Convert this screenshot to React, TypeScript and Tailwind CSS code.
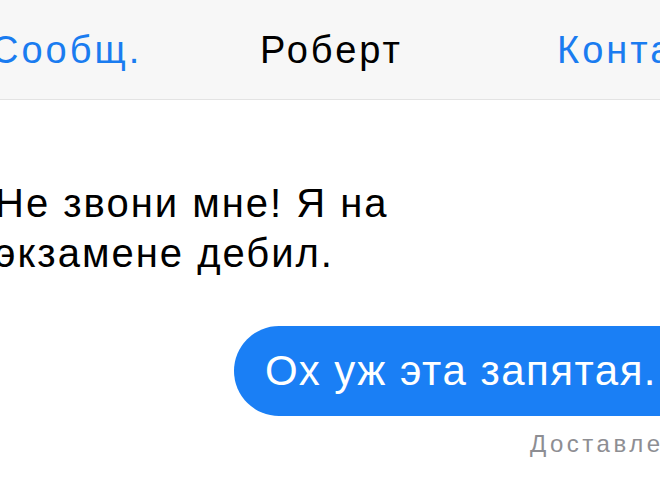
export default function App() {
  return (
    <div
      className="w-[660px] h-[480px] overflow-hidden bg-white"
      style={{ fontFamily: '"Liberation Sans", Arial, sans-serif' }}
    >
      <header className="h-[100px] bg-[#f7f7f7] border-b border-[#e3e3e3] flex items-center whitespace-nowrap text-[38px] leading-none tracking-[3px]">
        <span className="shrink-0 ml-[-9px] w-[269px] text-[#1a7cf0]">Сообщ.</span>
        <span className="shrink-0 w-[297px] text-black">Роберт</span>
        <span className="shrink-0 text-[#1a7cf0]">Контакты</span>
      </header>

      <div className="pt-[78px] ml-[-5px] w-[440px] text-[40px] leading-[50px] tracking-[2px] text-black">
        Не звони мне! Я на экзамене дебил.
      </div>

      <div className="mt-[48px] flex whitespace-nowrap">
        <div className="shrink-0 ml-[234px] h-[90px] rounded-full bg-[#1a7ff5] pl-[31px] pr-[60px] flex items-center text-white text-[42px] leading-none tracking-[1.5px]">
          Ох уж эта запятая.
        </div>
      </div>

      <div className="mt-[10px] ml-[530px] whitespace-nowrap text-[24px] tracking-[3.5px] text-[#8e8e93]">
        Доставлено
      </div>
    </div>
  );
}
